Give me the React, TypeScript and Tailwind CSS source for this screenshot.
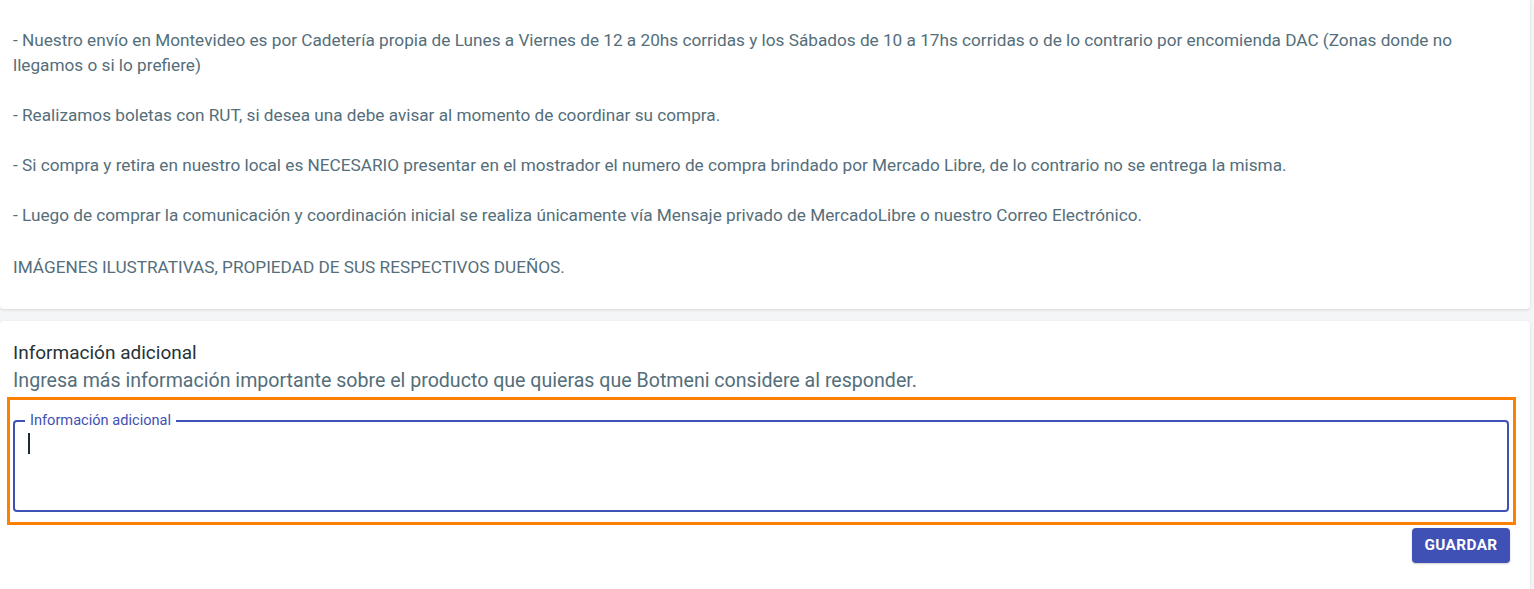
import React from 'react';

const lines = [
    '- Nuestro envío en Montevideo es por Cadetería propia de Lunes a Viernes de 12 a 20hs corridas y los Sábados de 10 a 17hs corridas o de lo contrario por encomienda DAC (Zonas donde no llegamos o si lo prefiere)',
    '- Realizamos boletas con RUT, si desea una debe avisar al momento de coordinar su compra.',
    '- Si compra y retira en nuestro local es NECESARIO presentar en el mostrador el numero de compra brindado por Mercado Libre, de lo contrario no se entrega la misma.',
    '- Luego de comprar la comunicación y coordinación inicial se realiza únicamente vía Mensaje privado de MercadoLibre o nuestro Correo Electrónico.',
    'IMÁGENES ILUSTRATIVAS, PROPIEDAD DE SUS RESPECTIVOS DUEÑOS.',
];

const App: React.FC = () => {
    return (
        <div className="min-h-[589px] bg-[#f4f5f7] pr-[4px] font-['Roboto',sans-serif]">
            {/* descripción */}
            <div className="bg-white rounded-b-[4px] shadow-[0_1px_3px_rgba(0,0,0,0.12)] px-[13px] pt-[28px] pb-[29px]">
                <div className="flex flex-col gap-[25px] text-[17.2px] leading-[25px] text-[#546e7a]">
                    {lines.map((l, i) => (
                        <p key={i} className={i === lines.length - 1 ? 'mt-[2px]' : ''}>{l}</p>
                    ))}
                </div>
            </div>

            {/* información adicional */}
            <div className="mt-[12px] bg-white rounded-t-[4px] shadow-[0_1px_3px_rgba(0,0,0,0.12)] px-[13px] pt-[20px] pb-[27px]">
                <h3 className="text-[19px] leading-[24px] text-[#263238]">Información adicional</h3>
                <p className="mt-[2px] text-[19.6px] leading-[28px] text-[#546e7a]">
                    Ingresa más información importante sobre el producto que quieras que Botmeni considere al responder.
                </p>

                <div className="mt-[2px] -ml-[6px] mr-[1px] border-[3px] border-[#ff8000] pl-[3px] pr-[4px] pt-[20px] pb-[10px]">
                    <div className="relative h-[92px] border-2 border-[#3f51b5] rounded-[4px] pl-[13px] pt-[11px]">
                        <span className="absolute -top-[10px] left-[10px] bg-white px-[5px] text-[14.6px] leading-[16px] text-[#3f51b5]">
                            Información adicional
                        </span>
                        <span className="block w-[2px] h-[21px] bg-[#1f2933]" />
                    </div>
                </div>

                <div className="flex justify-end mt-[3px] mr-[7px]">
                    <button className="h-[35px] w-[98px] rounded-[4px] bg-[#3f51b5] text-white text-[15.3px] font-bold tracking-[0.4px] shadow-[0_1px_2px_rgba(0,0,0,0.2)]">
                        GUARDAR
                    </button>
                </div>
            </div>
        </div>
    );
};

export default App;
